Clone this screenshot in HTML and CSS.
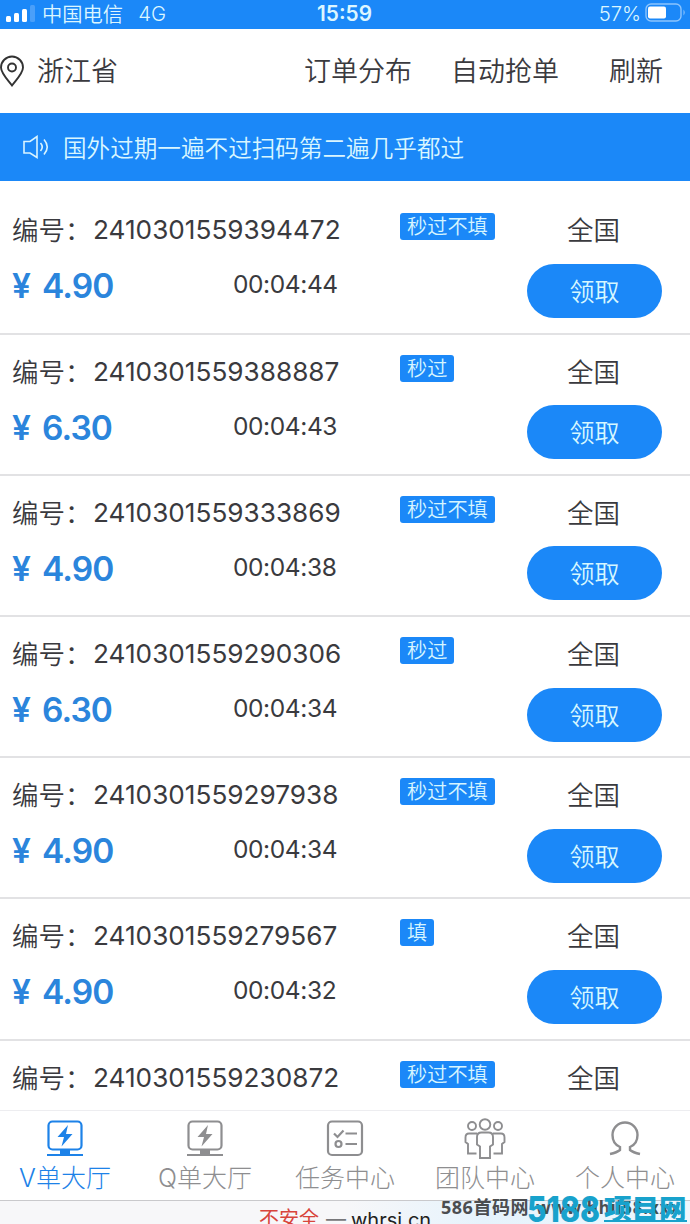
FILE: index.html
```html
<!DOCTYPE html>
<html lang="zh-CN">
<head>
  <meta charset="UTF-8">
  <meta name="viewport" content="width=device-width, initial-scale=1.0">
  <title>V单大厅</title>
  <link rel="stylesheet" href="styles.css">
</head>

<body>

<div class="phone">

  <!-- status bar -->
  <div class="status">
    <div class="status-left">
      <svg class="signal" width="30" height="18" viewBox="0 0 30 18">
        <rect x="0" y="12" width="5" height="6" rx="1.5" fill="#fff"/>
        <rect x="8" y="9" width="5" height="9" rx="1.5" fill="#fff"/>
        <rect x="16" y="5" width="5" height="13" rx="1.5" fill="#fff"/>
        <rect x="24" y="1" width="5" height="17" rx="1.5" fill="#4a9ff9"/>
      </svg>
      <span class="carrier">中国电信</span>
      <span class="network">4G</span>
    </div>
    <div class="clock">15:59</div>
    <div class="status-right">
      <span class="percent">57%</span>
      <svg width="41" height="20" viewBox="0 0 41 20">
        <rect x="1" y="1" width="35" height="17" rx="5" fill="none" stroke="#8cc4fd" stroke-width="1.4"/>
        <rect x="3" y="3.5" width="18" height="12" rx="2" fill="#fff"/>
        <path d="M38.5 6.5q2.500 3 0 6z" fill="#8cc4fd"/>
      </svg>
    </div>
  </div>

  <div class="topbar">
    <div class="location">
      <svg width="24" height="32" viewBox="0 0 24 32" fill="none" stroke="#333" stroke-width="1.9">
        <path d="M12 30.500C7 24 1 18 1 12.500a11 11 0 0 1 22 0C23 18 17 24 12 30.500z"/>
        <circle cx="12" cy="12.5" r="4"/>
      </svg>
      <span>浙江省</span>
    </div>
    <div class="menu">
      <span>订单分布</span>
      <span>自动抢单</span>
      <span>刷新</span>
    </div>
  </div>

  <div class="notice">
    <svg width="27" height="24" viewBox="0 0 27 24" fill="none" stroke="#d9f4ff" stroke-width="1.6">
      <path d="M1 6.500h6L14 1.500v21L7 18H1z"/>
      <path d="M17.500 8q3.500 4 0 8M21 4.500q6.500 7.500 0 15"/>
    </svg>
    <span>国外过期一遍不过扫码第二遍几乎都过</span>
  </div>

  <div class="list" id="list"></div>

  <div class="tabs">
    <div class="tab active">
      <svg width="38" height="40" viewBox="0 0 38 40" fill="none" stroke="currentColor" stroke-width="2.2">
        <rect x="2.500" y="2.500" width="33" height="28" rx="4"/>
        <path d="M1 36h36"/>
        <path d="M14 31h10v5H14z" fill="currentColor" stroke="none"/>
        <path d="M22 6L11.500 18h6.500L15.500 27.500l11-12.500h-6.500z" fill="currentColor" stroke="none"/>
      </svg>
      <span>V单大厅</span>
    </div>
    <div class="tab">
      <svg width="38" height="40" viewBox="0 0 38 40" fill="none" stroke="currentColor" stroke-width="2.2">
        <rect x="2.500" y="2.500" width="33" height="28" rx="4"/>
        <path d="M1 36h36"/>
        <path d="M14 31h10v5H14z" fill="currentColor" stroke="none"/>
        <path d="M22 6L11.500 18h6.500L15.500 27.500l11-12.500h-6.500z" fill="currentColor" stroke="none"/>
      </svg>
      <span>Q单大厅</span>
    </div>
    <div class="tab">
      <svg width="38" height="40" viewBox="0 0 38 40" fill="none" stroke="currentColor" stroke-width="2.2">
        <rect x="2" y="2.500" width="34" height="33.500" rx="4"/>
        <path d="M8 14.500l3.500 3.500 6-6.500M19.500 14.500h11.500M19.500 25h11.500"/>
        <circle cx="12.500" cy="25" r="3"/>
      </svg>
      <span>任务中心</span>
    </div>
    <div class="tab">
      <svg width="42" height="42" viewBox="0 0 42 42" fill="none" stroke="currentColor" stroke-width="1.9">
        <circle cx="21" cy="6.500" r="5.300"/>
        <circle cx="8" cy="8" r="4"/>
        <circle cx="34" cy="8" r="4"/>
        <path d="M13 19q0-4.500 4.500-4.500h7q4.500 0 4.500 4.500v7.500l-3 2V40h-10V28.500l-3-2z"/>
        <path d="M13 15.500H5q-3.500 0-3.500 4V24L4 26v9.500h8.500M29 15.500h8q3.500 0 3.500 4V24L38 26v9.500h-8.500"/>
      </svg>
      <span>团队中心</span>
    </div>
    <div class="tab">
      <svg width="34" height="40" viewBox="0 0 34 40" fill="none" stroke="currentColor" stroke-width="2.4">
        <path d="M2 35q7-1.500 10-4v-3C6 25.500 4.500 20.500 4.500 16a12.500 12.500 0 0 1 25 0c0 4.500-1.500 9.500-7.500 12v3q3 2.500 10 4"/>
      </svg>
      <span>个人中心</span>
    </div>
  </div>

  <div class="address">
    <span class="unsafe">不安全</span>
    <span class="dash">—</span>
    <span class="host">whrsi.cn</span>
  </div>

  <div class="mark">586首码网<span class="mark-url">www.hhii58.xxx</span></div>
  <div class="brand"><b>5188</b><span>项目网</span></div>

</div>

<script>
  const orders = [
    ["2410301559394472", "秒过不填", "4.90", "00:04:44"],
    ["2410301559388887", "秒过", "6.30", "00:04:43"],
    ["2410301559333869", "秒过不填", "4.90", "00:04:38"],
    ["2410301559290306", "秒过", "6.30", "00:04:34"],
    ["2410301559297938", "秒过不填", "4.90", "00:04:34"],
    ["2410301559279567", "填", "4.90", "00:04:32"],
    ["2410301559230872", "秒过不填"]
  ];

  document.getElementById("list").innerHTML = orders.map(([no, tag, price, time]) => `
    <div class="order">
      <div class="info">
        <div class="number"><span class="label">编号：</span><span class="digits">${no}</span></div>
        ${price ? `<div class="line">
          <span class="price"><span class="yen">¥</span>${price}</span>
          <span class="time">${time}</span>
        </div>` : ""}
      </div>
      <div class="kind"><span class="tag">${tag}</span></div>
      <div class="action">
        <span class="area">全国</span>
        ${price ? `<button class="take">领取</button>` : ""}
      </div>
    </div>`).join("");
</script>

</body>
</html>
```

FILE: styles.css
```css
* {
    box-sizing: border-box;
}

body {
    margin: 0;
    background: #fff;
    color: #3a3a3e;
    font-family: Inter, "Noto Sans CJK SC", sans-serif;
    font-weight: 350;
}

svg {
    display: block;
    flex: none;
}

.phone {
    position: relative;
    display: flex;
    flex-direction: column;
    width: 690px;
    height: 1224px;
    overflow: hidden;
    white-space: nowrap;
}

/* status bar */
.status {
    display: flex;
    flex: none;
    align-items: center;
    height: 29px;
    padding: 0 4px 3px 6px;
    background: #1b88f8;
    color: #dcf6ff;
    font-size: 20.3px;
}

.status-left,
.status-right {
    display: flex;
    flex: 1;
    align-items: center;
}

.status-right {
    justify-content: flex-end;
    gap: 4px;
}

.signal {
    margin-right: 6px;
}

.network {
    margin-left: 15px;
}

.clock {
    margin-right: 3px;
    font-size: 20.8px;
    font-weight: 600;
}

/* top links */
.topbar {
    display: flex;
    flex: none;
    align-items: center;
    justify-content: space-between;
    height: 84px;
    padding-right: 27px;
    font-size: 27px;
}

.topbar span {
    padding-bottom: 4px;
}

.location {
    display: flex;
    align-items: center;
    gap: 13px;
}

.menu {
    display: flex;
}

.menu span + span {
    margin-left: 39px;
}

.menu span:last-child {
    margin-left: 50px;
}

.notice {
    display: flex;
    flex: none;
    align-items: center;
    gap: 13px;
    height: 68px;
    padding-left: 23px;
    background: #1b88f8;
    color: #d9f6ff;
    font-size: 23.6px;
}

/* orders */
.list {
    flex: 1;
    min-height: 0;
    padding-top: 12.4px;
    overflow: hidden;
}

.order {
    display: flex;
    height: 141.2px;
    padding-left: 12px;
    border-bottom: 2px solid #e2e2e4;
}

.info {
    width: 388px;
    padding-top: 18px;
}

.number {
    display: flex;
    height: 38px;
    align-items: center;
    font-size: 26.5px;
}

.label {
    width: 81px;
    padding-bottom: 3px;
}

.digits {
    padding-bottom: 1px;
    font-size: 26.2px;
    font-weight: 400;
}

.line {
    display: flex;
    align-items: center;
    height: 74px;
}

.price {
    display: flex;
    width: 221px;
    color: #2b85dc;
    font-size: 33.5px;
    font-weight: 600;
    letter-spacing: -0.9px;
}

.yen {
    width: 30px;
}

.time {
    padding-bottom: 4px;
    font-size: 24.5px;
    font-weight: 400;
    letter-spacing: -0.4px;
}

.kind {
    width: 127px;
    padding-top: 20px;
}

.tag {
    display: inline-block;
    height: 27px;
    padding: 0 7px;
    border-radius: 3px;
    background: #1b88f8;
    color: #d6f5ff;
    font-size: 20.2px;
    line-height: 27px;
}

.action {
    display: flex;
    flex-direction: column;
    align-items: center;
    width: 135px;
    padding-top: 18px;
}

.area {
    height: 38px;
    padding-right: 2px;
    font-size: 26.5px;
    line-height: 38px;
}

.take {
    width: 135px;
    height: 54px;
    margin-top: 14.6px;
    padding: 0 0 2px;
    border: none;
    border-radius: 27px;
    background: #1b88f8;
    color: #d6f7ff;
    font: 350 25px Inter, "Noto Sans CJK SC", sans-serif;
}

/* bottom tabs */
.tabs {
    display: flex;
    flex: none;
    height: 91px;
    margin: 0 -5px;
    border-top: 1px solid #ededf0;
    border-bottom: 1px solid #c9c9cc;
}

.tab {
    display: flex;
    flex: 1;
    flex-direction: column;
    align-items: center;
    height: 90px;
    padding-top: 7px;
    color: #8e8e90;
    font-size: 25px;
    font-weight: 300;
    line-height: 37px;
}

.tab svg {
    height: 42px;
}

.active {
    color: #1d82e8;
}

/* browser address strip */
.address {
    display: flex;
    flex: none;
    gap: 7px;
    height: 23px;
    padding-left: 259px;
    background: linear-gradient(90deg, #f7f7f9 50%, #e6f3fc 70%, #eef7fd);
    font-size: 20px;
    font-weight: 400;
    line-height: 37px;
    overflow: hidden;
}

.unsafe {
    color: #d8453c;
}

.dash {
    width: 18px;
    color: #77777a;
}

.host {
    color: #222;
    line-height: 38px;
}

.mark {
    position: absolute;
    left: 441px;
    top: 1194px;
    color: #4b4d50;
    font: bold 18px/26px "Noto Sans", "Noto Sans CJK SC", sans-serif;
    letter-spacing: 0.5px;
}

.mark-url {
    margin-left: 7px;
    font-size: 17px;
    letter-spacing: 0.8px;
}

.brand {
    position: absolute;
    left: 527px;
    top: 1190px;
    display: flex;
    color: #18a2cc;
    font: 900 27.5px/34px "Noto Sans CJK SC", sans-serif;
}

.brand b {
    width: 77px;
    font: 800 35px/38px Inter, sans-serif;
    transform: scaleX(0.86);
    transform-origin: left;
}

.brand span {
    height: 32px;
    border-bottom: 2px solid #18a2cc;
}
```
